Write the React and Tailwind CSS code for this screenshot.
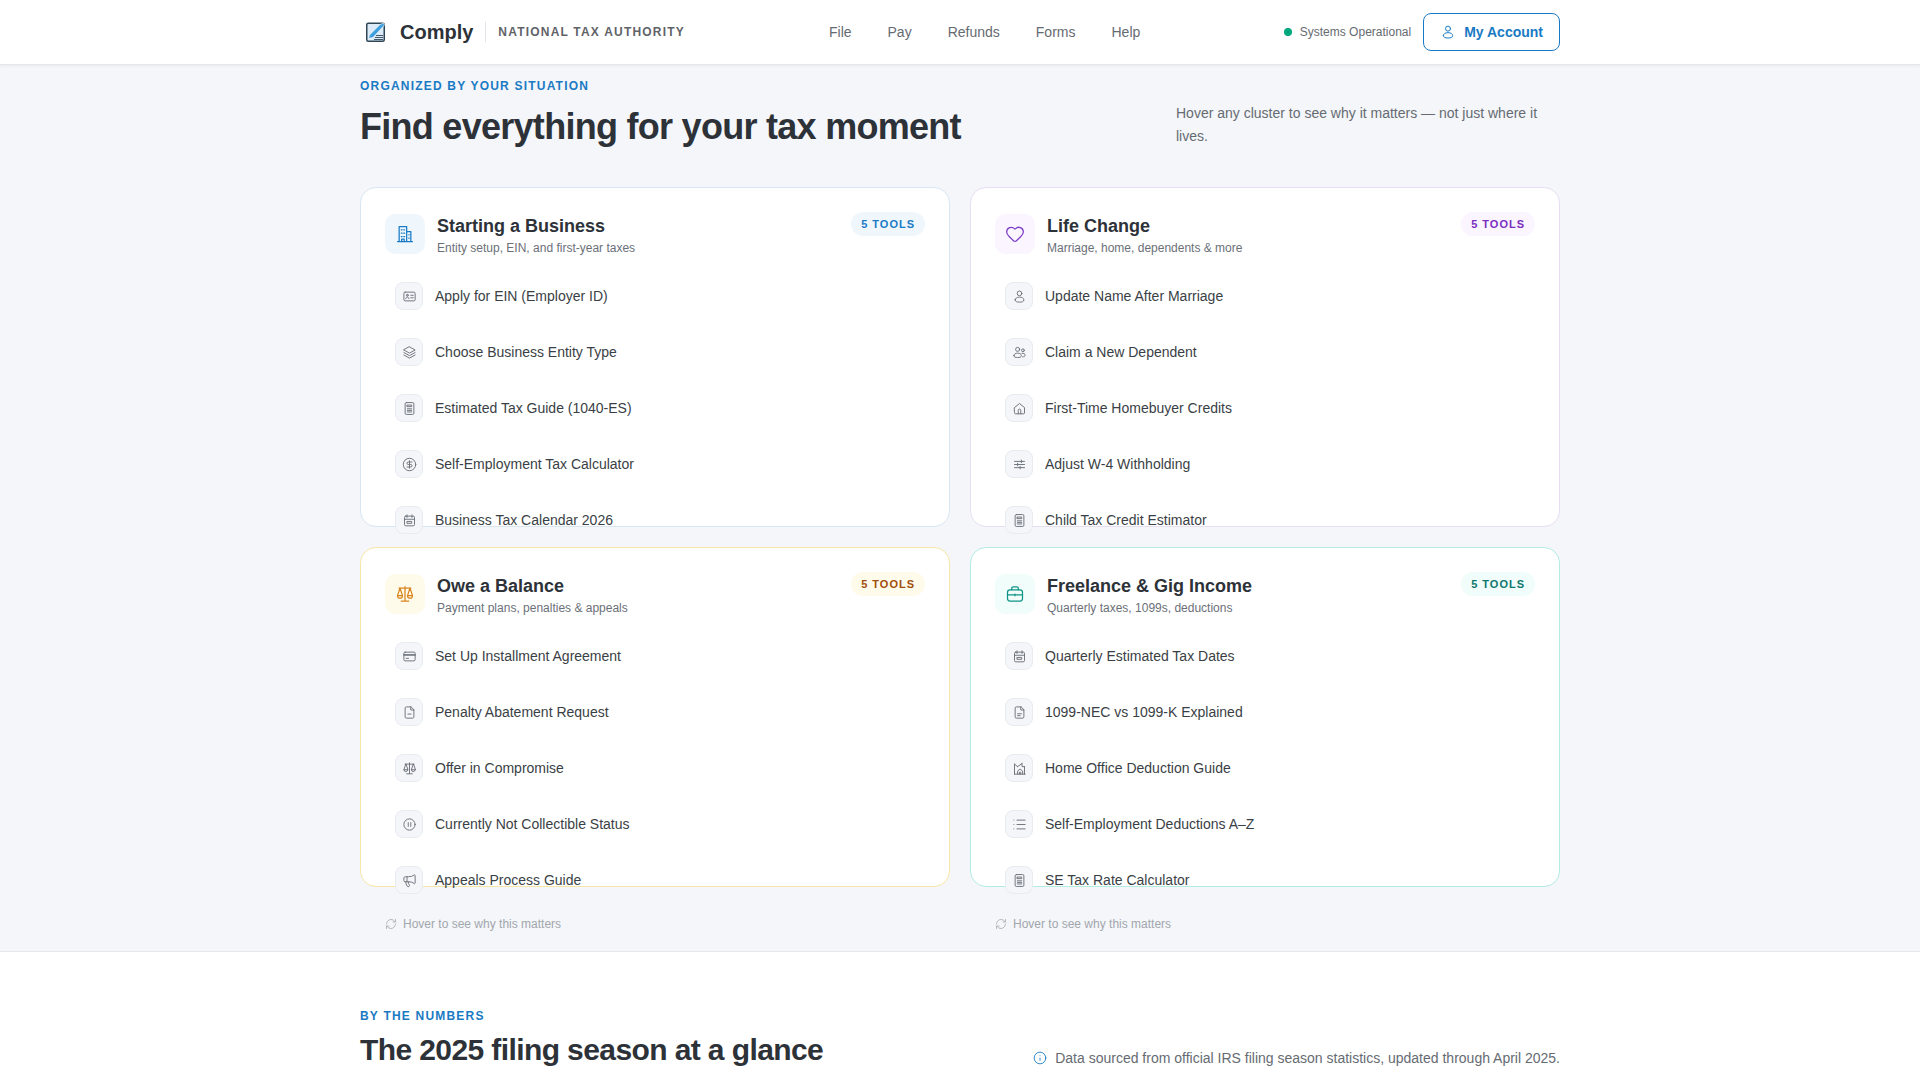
import React from 'react';
import { Heart, RefreshCw, Info, CircleDollarSign, Megaphone, List } from 'lucide-react';

const Glyph = ({ size = 16, children }) => (
  <svg width={size} height={size} viewBox="0 0 24 24" fill="none" stroke="currentColor" strokeWidth="1.5" strokeLinecap="round" strokeLinejoin="round">
    {children}
  </svg>
);

const BuildingIcon = ({ size }) => (
  <Glyph size={size}>
    <path d="M3 21h18M5 21V3h9v18M14 9h5v12" />
    <path d="M7.5 7h1M10.5 7h1M7.5 11h1M10.5 11h1M7.5 15h1M10.5 15h1M16.5 13h.5M16.5 17h.5M8 21v-3h3v3" />
  </Glyph>
);
const ScalesIcon = ({ size }) => (
  <Glyph size={size}>
    <path d="M5 5h14M12 3v17M7.5 20.5h9" />
    <path d="M6 5l-3 9h6zM18 5l-3 9h6z" />
    <path d="M3 14a3 3 0 0 0 6 0M15 14a3 3 0 0 0 6 0" />
  </Glyph>
);
const BriefcaseIcon = ({ size }) => (
  <Glyph size={size}>
    <rect x="3" y="7" width="18" height="13.5" rx="3" />
    <path d="M8 7V5.5a2 2 0 0 1 2-2h4a2 2 0 0 1 2 2V7M3 13h18M12 12v2" />
  </Glyph>
);
const IdCardIcon = ({ size }) => (
  <Glyph size={size}>
    <rect x="3" y="5" width="18" height="14" rx="2" />
    <circle cx="8.5" cy="10" r="1.5" />
    <path d="M6 15.5c0-1.5 1-2.5 2.500-2.500s2.500 1 2.500 2.500M14 10h4M14 14h4" />
  </Glyph>
);
const StackIcon = ({ size }) => (
  <Glyph size={size}>
    <path d="M12 3l9 5-9 5-9-5zM3 12l9 5 9-5M3 16l9 5 9-5" />
  </Glyph>
);
const CalculatorIcon = ({ size }) => (
  <Glyph size={size}>
    <rect x="5" y="2.500" width="14" height="19" rx="2" />
    <path d="M8.500 6.500h7v2.500h-7zM8.500 12.500h7M8.500 15h7M8.500 17.500h7" />
  </Glyph>
);
const CalendarIcon = ({ size }) => (
  <Glyph size={size}>
    <rect x="4" y="5" width="16" height="15.500" rx="2" />
    <path d="M8 3v4M16 3v4M4 10h16M8.500 13.500h7v3h-7z" />
  </Glyph>
);
const UserIcon = ({ size }) => (
  <Glyph size={size}>
    <circle cx="12" cy="7" r="3.750" />
    <path d="M5 17.500c0-2.800 3-4.500 7-4.500s7 1.700 7 4.500-3 3.500-7 3.500-7-.7-7-3.500z" />
  </Glyph>
);
const UsersIcon = ({ size }) => (
  <Glyph size={size}>
    <circle cx="9" cy="7" r="3.250" />
    <circle cx="17.500" cy="8.500" r="2.250" />
    <path d="M3 17c0-2.500 2.700-4 6-4s6 1.500 6 4-2.700 3-6 3-6-.5-6-3z" />
    <path d="M16 13.200c2.800-.3 5 .9 5 3.100 0 1.800-1.600 2.700-4 2.700" />
  </Glyph>
);
const HomeIcon = ({ size }) => (
  <Glyph size={size}>
    <path d="M4 10.500L12 4l8 6.500V19a1.500 1.500 0 0 1-1.500 1.500h-13A1.500 1.500 0 0 1 4 19z" />
    <path d="M10 20.500V15a2 2 0 0 1 4 0v5.500" />
  </Glyph>
);
const SlidersIcon = ({ size }) => (
  <Glyph size={size}>
    <path d="M4 7h16M4 12h16M4 17h16M15 5v4M9 10v4M13 15v4" />
  </Glyph>
);
const CardIcon = ({ size }) => (
  <Glyph size={size}>
    <rect x="3" y="5" width="18" height="14" rx="2" />
    <path d="M3 9h18M3 10h18M6.500 15h4" />
  </Glyph>
);
const FileMinusIcon = ({ size }) => (
  <Glyph size={size}>
    <path d="M14 3H7a2 2 0 0 0-2 2v14a2 2 0 0 0 2 2h10a2 2 0 0 0 2-2V8zM14 3v5h5M9.500 14.500h5" />
  </Glyph>
);
const FileLinesIcon = ({ size }) => (
  <Glyph size={size}>
    <path d="M14 3H7a2 2 0 0 0-2 2v14a2 2 0 0 0 2 2h10a2 2 0 0 0 2-2V8zM14 3v5h5M9 14h6M9 17h4" />
  </Glyph>
);
const PauseCircleIcon = ({ size }) => (
  <Glyph size={size}>
    <circle cx="12" cy="12" r="9" />
    <path d="M10 9v6M14 9v6" />
  </Glyph>
);
const HomeOfficeIcon = ({ size }) => (
  <Glyph size={size}>
    <path d="M4 21V5M4 21h17M20 21V9M4 5l5 4M16 4v5l4 0" />
    <path d="M9 21v-5l4-3 4 3v5M12 21v-3h2v3M9 9l7-5" />
  </Glyph>
);

const clusters = [
  {
    title: 'Starting a Business',
    sub: 'Entity setup, EIN, and first-year taxes',
    icon: BuildingIcon,
    border: 'border-[#d8e6f3]',
    iconBox: 'bg-[#eff7fd] text-[#1a7ac4]',
    badge: 'bg-[#eff7fd] text-[#1a7ac4]',
    items: [
      ['Apply for EIN (Employer ID)', IdCardIcon],
      ['Choose Business Entity Type', StackIcon],
      ['Estimated Tax Guide (1040-ES)', CalculatorIcon],
      ['Self-Employment Tax Calculator', CircleDollarSign],
      ['Business Tax Calendar 2026', CalendarIcon],
    ],
  },
  {
    title: 'Life Change',
    sub: 'Marriage, home, dependents & more',
    icon: Heart,
    border: 'border-[#e7def3]',
    iconBox: 'bg-[#faf5ff] text-[#7e3fc9]',
    badge: 'bg-[#faf5ff] text-[#7b2fbe]',
    items: [
      ['Update Name After Marriage', UserIcon],
      ['Claim a New Dependent', UsersIcon],
      ['First-Time Homebuyer Credits', HomeIcon],
      ['Adjust W-4 Withholding', SlidersIcon],
      ['Child Tax Credit Estimator', CalculatorIcon],
    ],
  },
  {
    title: 'Owe a Balance',
    sub: 'Payment plans, penalties & appeals',
    icon: ScalesIcon,
    border: 'border-[#f7e6a8]',
    iconBox: 'bg-[#fffbeb] text-[#d9851f]',
    badge: 'bg-[#fffbeb] text-[#a04e0c]',
    items: [
      ['Set Up Installment Agreement', CardIcon],
      ['Penalty Abatement Request', FileMinusIcon],
      ['Offer in Compromise', ScalesIcon],
      ['Currently Not Collectible Status', PauseCircleIcon],
      ['Appeals Process Guide', Megaphone],
    ],
  },
  {
    title: 'Freelance & Gig Income',
    sub: 'Quarterly taxes, 1099s, deductions',
    icon: BriefcaseIcon,
    border: 'border-[#b2ece4]',
    iconBox: 'bg-[#f0fdfa] text-[#0d9488]',
    badge: 'bg-[#f0fdfa] text-[#0f766e]',
    items: [
      ['Quarterly Estimated Tax Dates', CalendarIcon],
      ['1099-NEC vs 1099-K Explained', FileLinesIcon],
      ['Home Office Deduction Guide', HomeOfficeIcon],
      ['Self-Employment Deductions A–Z', List],
      ['SE Tax Rate Calculator', CalculatorIcon],
    ],
  },
];

const LogoMark = () => (
  <svg width="20" height="20" viewBox="0 0 20 20" fill="none">
    <rect x="0.75" y="1.25" width="17.5" height="18" rx="1.5" fill="#dcebf7" stroke="#2f4656" strokeWidth="1.5" />
    <path d="M2.5 16.5 L3.5 13 L14 2.5 L17.5 1 L18.5 3 L7 15.5 Z" fill="#3f9fdc" stroke="#ffffff" strokeWidth="0.6" />
    <path d="M10 13.5h7M9 15.5h8M8 17.5h9" stroke="#2f4656" strokeWidth="0.9" />
  </svg>
);

const ClusterCard = ({ cluster }) => {
  const Icon = cluster.icon;
  return (
    <div className={`h-[340px] rounded-2xl border bg-white px-6 pt-[26px] ${cluster.border}`}>
      <div className="flex items-start justify-between">
        <div className="flex items-start gap-3">
          <div className={`flex h-10 w-10 items-center justify-center rounded-[10px] ${cluster.iconBox}`}>
            <Icon size={20} strokeWidth={1.5} />
          </div>
          <div className="mt-px">
            <h3 className="text-[18px] font-bold leading-[22px] text-[#2d3238]">{cluster.title}</h3>
            <p className="mt-[3px] text-xs leading-4 text-[#6b7078]">{cluster.sub}</p>
          </div>
        </div>
        <span className={`-mt-[2px] rounded-full px-[10px] py-[5px] text-[11px] font-bold leading-[14px] tracking-[1px] ${cluster.badge}`}>5 TOOLS</span>
      </div>
      <ul className="mt-[12px]">
        {cluster.items.map(([label, ItemIcon]) => (
          <li key={label} className="flex h-14 items-center gap-3 pl-[10px] text-sm text-[#3a3f45]">
            <span className="flex h-7 w-7 items-center justify-center rounded-lg border border-[#e8ebf0] bg-[#f4f6fa] text-[#6b7078]">
              <ItemIcon size={15} strokeWidth={1.5} />
            </span>
            {label}
          </li>
        ))}
      </ul>
    </div>
  );
};

const HoverHint = () => (
  <div className="flex items-center gap-[6px] pl-[25px] text-xs text-[#a2a6ad]">
    <RefreshCw size={12} strokeWidth={1.5} />
    Hover to see why this matters
  </div>
);

const App = () => {
  return (
    <div className="h-[1080px] overflow-hidden bg-white font-['Liberation_Sans',Arial,sans-serif]">
      <header className="relative z-10 h-[65px] border-b border-[#e5e7eb] bg-white shadow-[0_1px_3px_rgba(0,0,0,0.06)]">
        <div className="mx-auto flex h-full w-[1200px] items-center">
          <div className="flex items-center pl-[6px]">
            <LogoMark />
            <span className="ml-[14px] text-xl font-bold text-[#2d3238]">Comply</span>
            <span className="ml-3 h-5 w-px bg-[#e1e4e8]" />
            <span className="ml-3 text-xs font-semibold tracking-[1.2px] text-[#5f6368]">NATIONAL TAX AUTHORITY</span>
          </div>
          <nav className="ml-[144px] flex items-center gap-9 text-sm text-[#666b72]">
            <span>File</span>
            <span>Pay</span>
            <span>Refunds</span>
            <span>Forms</span>
            <span>Help</span>
          </nav>
          <div className="ml-auto flex items-center">
            <span className="h-2 w-2 rounded-full bg-[#00a67e]" />
            <span className="ml-2 text-xs text-[#666b72]">Systems Operational</span>
            <button className="ml-3 flex h-[38px] items-center gap-2 rounded-lg border-[1.5px] border-[#1a7ac4] px-4 text-sm font-bold text-[#1a7ac4]">
              <UserIcon size={16} />
              My Account
            </button>
          </div>
        </div>
      </header>

      <section className="h-[887px] border-b border-[#e5e7eb] bg-[#f4f6fa]">
        <div className="mx-auto w-[1200px]">
          <div className="flex items-start justify-between pt-[14px]">
            <div>
              <p className="text-xs font-bold leading-[14px] tracking-[1.2px] text-[#1a7ac4]">ORGANIZED BY YOUR SITUATION</p>
              <h1 className="mt-[12px] text-4xl font-bold leading-[44px] tracking-[-0.02em] text-[#2d3238]">Find everything for your tax moment</h1>
            </div>
            <p className="mt-[23px] w-[384px] text-sm leading-[23px] text-[#666b72]">Hover any cluster to see why it matters — not just where it lives.</p>
          </div>
          <div className="mt-[38px] grid grid-cols-2 gap-5">
            {clusters.map((c) => (
              <ClusterCard key={c.title} cluster={c} />
            ))}
          </div>
          <div className="mt-[29px] grid grid-cols-2 gap-5">
            <HoverHint />
            <HoverHint />
          </div>
        </div>
      </section>

      <section>
        <div className="mx-auto flex w-[1200px] items-start justify-between pt-[57px]">
          <div>
            <p className="text-xs font-bold leading-[14px] tracking-[1.2px] text-[#1a7ac4]">BY THE NUMBERS</p>
            <h2 className="mt-[9px] text-3xl font-bold leading-[36px] tracking-[-0.02em] text-[#2d3238]">The 2025 filing season at a glance</h2>
          </div>
          <p className="mt-[39px] flex items-center gap-2 text-sm text-[#666b72]">
            <Info size={14} strokeWidth={1.5} className="text-[#1a7ac4]" />
            Data sourced from official IRS filing season statistics, updated through April 2025.
          </p>
        </div>
      </section>
    </div>
  );
};

export default App;
